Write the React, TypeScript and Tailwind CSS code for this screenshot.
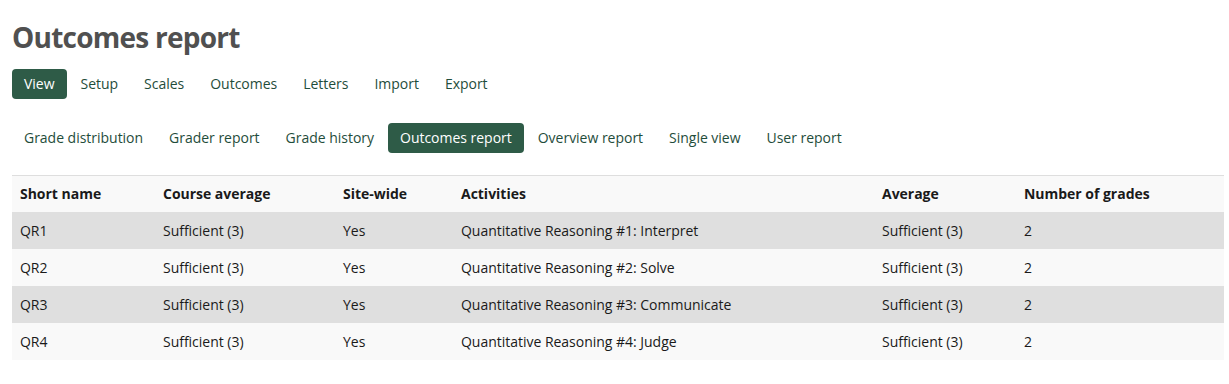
import React from "react";

const tabs = ["View", "Setup", "Scales", "Outcomes", "Letters", "Import", "Export"];
const reports = [
  "Grade distribution",
  "Grader report",
  "Grade history",
  "Outcomes report",
  "Overview report",
  "Single view",
  "User report",
];

const rows = [
  { name: "QR1", activity: "Quantitative Reasoning #1: Interpret" },
  { name: "QR2", activity: "Quantitative Reasoning #2: Solve" },
  { name: "QR3", activity: "Quantitative Reasoning #3: Communicate" },
  { name: "QR4", activity: "Quantitative Reasoning #4: Judge" },
];

function Pills({ items, active }: { items: string[]; active: string }) {
  return (
    <ul className="flex gap-[2px]">
      {items.map((item) => (
        <li key={item}>
          <a
            href="#"
            className={
              item === active
                ? "block h-[30px] px-3 leading-[30px] rounded bg-[#2e5b47] text-white"
                : "block h-[30px] px-3 leading-[30px] rounded text-[#1f4d3b]"
            }
          >
            {item}
          </a>
        </li>
      ))}
    </ul>
  );
}

export default function App() {
  return (
    <div className="min-h-[384px] bg-white px-3 pt-[18px] text-[14px] tracking-[-0.02px] text-[#1a1a1a]" style={{ fontFamily: "'Open Sans', sans-serif" }}>
      <h1 className="text-[28px] font-bold leading-[38px] tracking-[-0.75px] text-[#505050]">Outcomes report</h1>
      <div className="mt-[13px]">
        <Pills items={tabs} active="View" />
      </div>
      <div className="mt-6">
        <Pills items={reports} active="Outcomes report" />
      </div>
      <table className="mt-[22px] w-[1212px] table-fixed border-collapse border-t border-[#dedede]">
        <colgroup>
          <col className="w-[143px]" />
          <col className="w-[180px]" />
          <col className="w-[118px]" />
          <col className="w-[421px]" />
          <col className="w-[142px]" />
          <col />
        </colgroup>
        <thead>
          <tr className="h-[36px] bg-[#f9f9f9] text-left">
            <th className="px-2 font-bold">Short name</th>
            <th className="px-2 font-bold">Course average</th>
            <th className="px-2 font-bold">Site-wide</th>
            <th className="px-2 font-bold">Activities</th>
            <th className="px-2 font-bold">Average</th>
            <th className="px-2 font-bold">Number of grades</th>
          </tr>
        </thead>
        <tbody>
          {rows.map((r, i) => (
            <tr key={r.name} className={i % 2 === 0 ? "h-[37px] bg-[#dfdfdf]" : "h-[37px] bg-[#f9f9f9]"}>
              <td className="px-2">{r.name}</td>
              <td className="px-2">Sufficient (3)</td>
              <td className="px-2">Yes</td>
              <td className="px-2">{r.activity}</td>
              <td className="px-2">Sufficient (3)</td>
              <td className="px-2">2</td>
            </tr>
          ))}
        </tbody>
      </table>
    </div>
  );
}
